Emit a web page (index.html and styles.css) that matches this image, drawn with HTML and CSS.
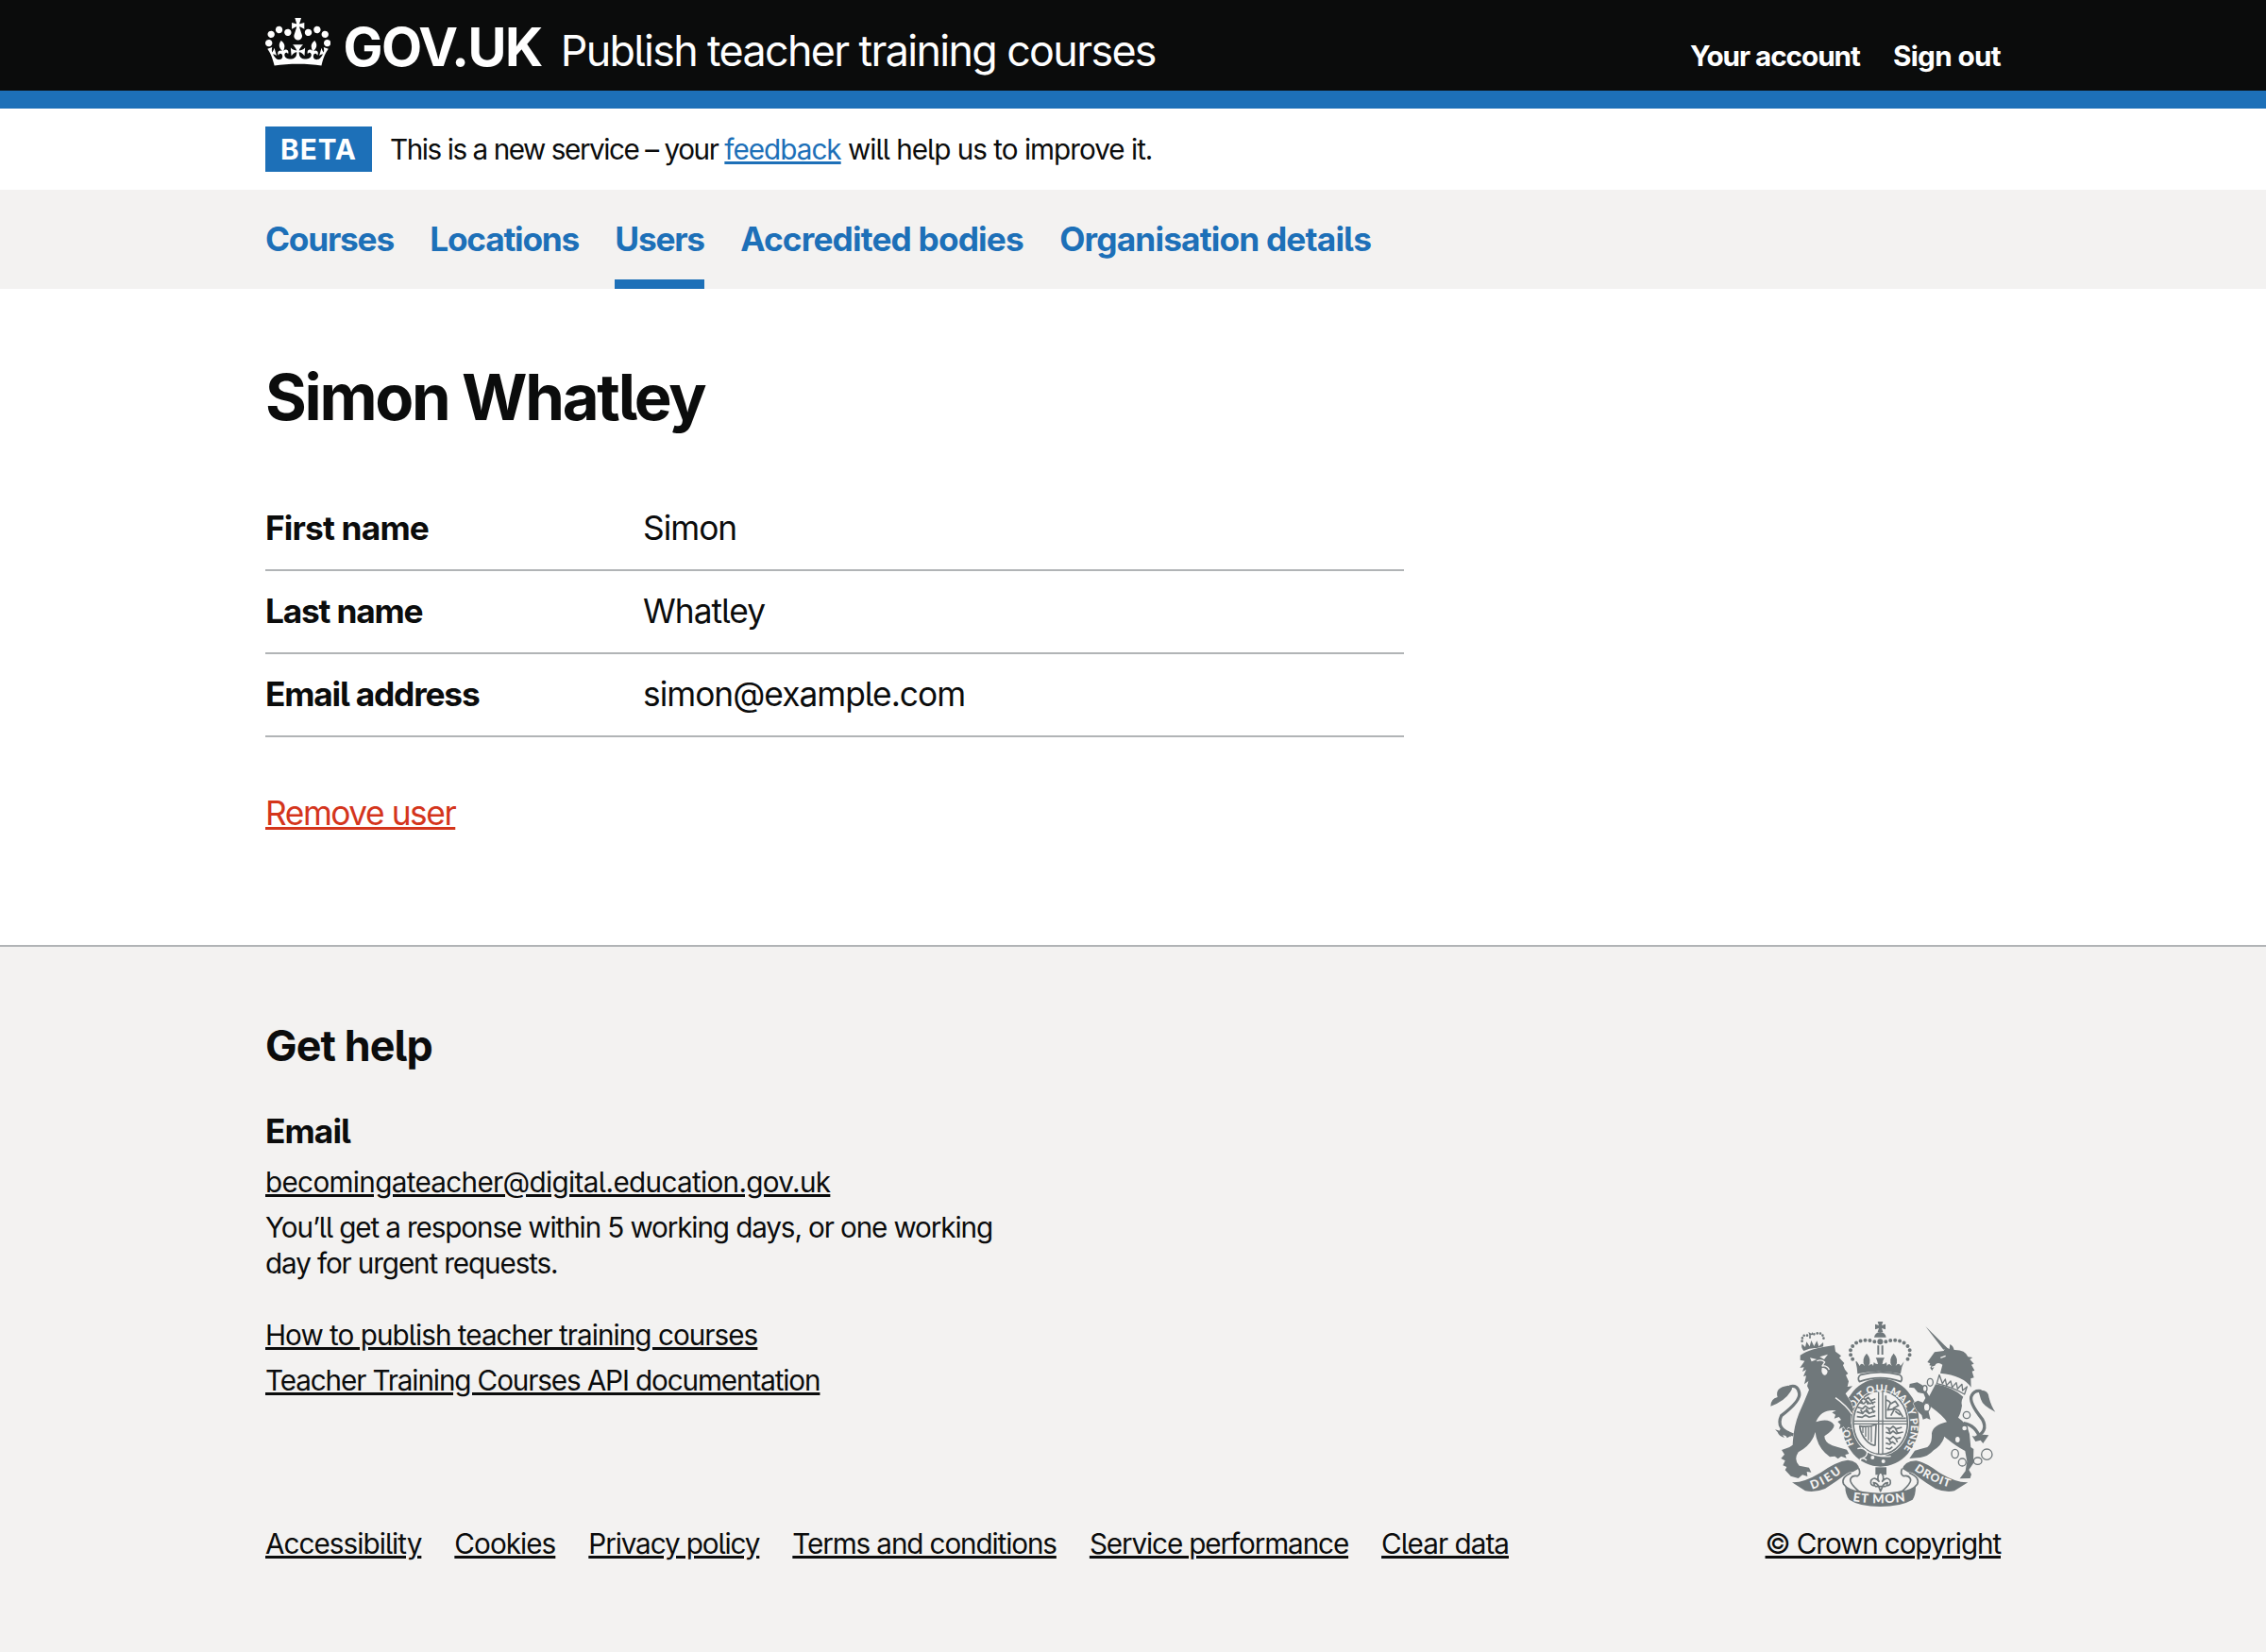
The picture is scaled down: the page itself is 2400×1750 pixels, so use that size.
FILE: index.html
```html
<!DOCTYPE html>
<html lang="en">
<head>
<meta charset="utf-8">
<title>Simon Whatley - Publish teacher training courses</title>
<link rel="stylesheet" href="styles.css">
</head>
<body>
<header class="header">
  <div class="container header-row">
    <svg class="crown" viewBox="0 0 132 97" aria-hidden="true"><path fill="currentColor" d="M25 30.2c3.5 1.5 7.7-.2 9.1-3.7 1.5-3.6-.2-7.8-3.9-9.2-3.6-1.4-7.6.3-9.1 3.9-1.4 3.5.3 7.5 3.9 9zM9 39.5c3.6 1.5 7.8-.2 9.2-3.7 1.5-3.6-.2-7.8-3.9-9.1-3.6-1.5-7.6.2-9.1 3.8-1.4 3.5.3 7.5 3.8 9zM4.4 57.2c3.5 1.5 7.7-.2 9.1-3.8 1.5-3.6-.2-7.7-3.9-9.1-3.5-1.5-7.6.3-9.1 3.8-1.4 3.5.3 7.6 3.9 9.1zm38.3-21.4c3.5 1.5 7.7-.2 9.1-3.8 1.5-3.6-.2-7.7-3.9-9.1-3.6-1.5-7.6.3-9.1 3.8-1.3 3.6.4 7.7 3.9 9.1zm64.4-5.6c-3.6 1.5-7.8-.2-9.1-3.7-1.5-3.6.2-7.8 3.8-9.2 3.6-1.4 7.7.3 9.2 3.9 1.3 3.5-.4 7.5-3.9 9zm15.9 9.3c-3.6 1.5-7.7-.2-9.1-3.7-1.5-3.6.2-7.8 3.7-9.1 3.6-1.5 7.7.2 9.2 3.8 1.5 3.5-.3 7.5-3.8 9zm4.7 17.7c-3.6 1.5-7.8-.2-9.2-3.8-1.5-3.6.2-7.7 3.9-9.1 3.6-1.5 7.7.3 9.2 3.8 1.3 3.5-.4 7.6-3.9 9.1zM89.3 35.8c-3.6 1.5-7.8-.2-9.2-3.8-1.4-3.6.2-7.7 3.9-9.1 3.6-1.5 7.7.3 9.2 3.8 1.4 3.6-.3 7.7-3.9 9.1zM69.7 17.7l8.9 4.7V9.3l-8.9 2.8c-.2-.3-.5-.6-.9-.9L72.4 0H59.6l3.5 11.2c-.3.3-.6.5-.9.9l-8.8-2.8v13.1l8.8-4.7c.3.3.6.7.9.9l-5 15.4v.1c-.2.8-.4 1.6-.4 2.4 0 4.1 3.1 7.5 7 8.1h.2c.3 0 .7.1 1 .1.4 0 .7 0 1-.1h.2c4-.6 7.1-4.1 7.1-8.1 0-.8-.1-1.7-.4-2.4V34l-5.1-15.4c.4-.2.7-.6 1-.9zM66 92.8c16.9 0 32.8 1.1 47.1 3.2 4-16.9 8.9-26.7 14-33.5l-9.6-3.4c1 4.9 1.1 7.2 0 10.2-1.5-1.4-3-4.3-4.2-8.7L108.6 76c2.8-2 5-3.2 7.5-3.3-4.4 9.4-10 11.9-13.6 11.2-4.3-.8-6.3-4.6-5.6-7.9 1-4.7 5.7-5.9 8-.5 4.3-8.7-3-11.4-7.6-8.8 7.1-7.2 7.9-13.5 2.1-21.1-8 6.1-8.1 12.3-4.5 20.8-4.7-5.4-12.1-2.5-9.5 6.2 3.4-5.2 7.9-2 7.2 3.1-.6 4.3-6.4 7.8-13.5 7.2-10.3-.9-10.9-8-11.2-13.8 2.5-.5 7.1 1.8 11 7.3L80.2 60c-4.1 4.4-8 5.3-12.3 5.4 1.4-4.4 8-11.6 8-11.6H55.5s6.4 7.2 7.9 11.6c-4.2-.1-8-1-12.3-5.4l1.4 16.4c3.9-5.5 8.5-7.7 10.9-7.3-.3 5.8-.9 12.8-11.1 13.8-7.2.6-12.9-2.9-13.5-7.2-.7-5 3.8-8.3 7.1-3.1 2.7-8.7-4.6-11.6-9.4-6.2 3.7-8.5 3.6-14.7-4.6-20.8-5.8 7.6-5 13.9 2.2 21.1-4.7-2.6-11.9.1-7.7 8.8 2.3-5.5 7.1-4.2 8.1.5.7 3.3-1.3 7.1-5.7 7.9-3.5.7-9-1.8-13.5-11.2 2.5.1 4.7 1.3 7.5 3.3l-4.7-15.4c-1.2 4.4-2.7 7.2-4.3 8.7-1.1-3-.9-5.3 0-10.2l-9.5 3.4c5 6.9 9.9 16.7 14 33.5 14.8-2.1 30.8-3.2 47.7-3.2z"/></svg>
    <a class="logotype" href="#">GOV.UK</a>
    <a class="service-name" href="#">Publish teacher training courses</a>
    <nav class="account">
      <a class="account-link" href="#">Your account</a>
      <a class="account-link signout" href="#">Sign out</a>
    </nav>
  </div>
</header>

<div class="container phase">
  <strong class="tag">BETA</strong>
  <span class="phase-text"><span class="phase-intro">This is a new service – your </span><a class="link" href="#">feedback</a> will help us to improve it.</span>
</div>

<nav class="primary">
  <div class="container primary-list">
    <a class="primary-link" href="#">Courses</a>
    <a class="primary-link" href="#">Locations</a>
    <a class="primary-link current" href="#">Users</a>
    <a class="primary-link loose" href="#">Accredited bodies</a>
    <a class="primary-link loose" href="#">Organisation details</a>
  </div>
</nav>

<main class="container main">
  <h1 class="title">Simon Whatley</h1>
  <dl class="summary">
    <div class="summary-row"><dt class="key first">First name</dt><dd class="value">Simon</dd></div>
    <div class="summary-row"><dt class="key">Last name</dt><dd class="value">Whatley</dd></div>
    <div class="summary-row"><dt class="key">Email address</dt><dd class="value">simon@example.com</dd></div>
  </dl>
  <a class="remove" href="#">Remove user</a>
</main>

<footer class="footer">
  <div class="container footer-row">
    <div class="footer-main">
      <h2 class="help-title">Get help</h2>
      <h3 class="help-subtitle">Email</h3>
      <ul class="help-list">
        <li><a class="footer-link mail" href="#">becomingateacher@digital.education.gov.uk</a></li>
        <li class="response">You’ll get a response within 5 working days, or one working<br>day for urgent requests.</li>
      </ul>
      <ul class="help-list docs">
        <li><a class="footer-link guide" href="#">How to publish teacher training courses</a></li>
        <li><a class="footer-link" href="#">Teacher Training Courses API documentation</a></li>
      </ul>
      <div class="meta-links">
        <a class="footer-link guide" href="#">Accessibility</a>
        <a class="footer-link guide" href="#">Cookies</a>
        <a class="footer-link" href="#">Privacy policy</a>
        <a class="footer-link" href="#">Terms and conditions</a>
        <a class="footer-link" href="#">Service performance</a>
        <a class="footer-link guide" href="#">Clear data</a>
      </div>
    </div>
    <div class="copyright">
      <svg class="crest" viewBox="40 30 720 595" aria-hidden="true">
        <defs>
          <path id="garter" d="M309 424 A97 111 0 1 1 459 448"/>
          <path id="dieu" d="M176 566 Q232 547 280 503"/>
          <path id="etmon" d="M305 603 Q392 617 482 602"/>
          <path id="droit" d="M500 505 Q552 545 628 564"/>
        </defs>
        <!-- royal crown -->
        <g class="ink">
          <path d="M384 33h17l-4 12 12-4v17l-12-4 4 12h-17l4-12-12 4V41l12 4zM373 83q2-15 19-17 17 2 19 17z"/>
          <circle cx="392" cy="97" r="9"/>
          <path d="M383 109h6v29h-6zM396 109h6v29h-6z"/>
          <path d="M318 160l9 14q5-13 16 0-12-20 6-40 18 20 6 40 11-12 15 0l2-12q5 7 13 6-2-12-7-20h28q-6 8-7 20 8 1 13-6l2 12q5-12 15 0-12-20 6-40 18 20 6 40 11-13 16 0l11-14q-9 18-11 39-70-15-137 0-1-20-6-39z"/>
        </g>
        <path class="beads" d="M374 97Q338 84 311 104 282 130 314 164M410 97Q446 84 473 104 502 130 470 164"/>
        <path class="outline" d="M330 202q62-16 124 0 12 8 4 22-66-24-132 0-8-14 4-22z"/>
        <!-- garter -->
        <ellipse class="ink" cx="393" cy="354" rx="123" ry="140"/>
        <ellipse class="paper" cx="393" cy="354" rx="91" ry="106"/>
        <ellipse class="outline" cx="393" cy="354" rx="86" ry="101"/>
        <path class="ink" d="M385 256h4v198h-4zM398 256h4v198h-4zM308 347h170v4H308zM308 356h170v4H308z"/>
        <path class="squiggle" d="M334 275l12 6 8-7 8 10 15-6M326 290l14 4 9-9 10 9 18-6M320 305l16 5 9-9 12 9 19-8M318 320l17 5 10-9 12 9 20-8M318 335l17 2 10-7 12 7 20-5M330 283l8 12M345 280l9 17M362 283l8 13M330 313l8 14M347 309l10 16M365 307l8 16M410 370l14 4 9-8 10 8 18-5M410 385l14 4 9-8 10 8 22-5M410 402l14 4 9-8 10 8 15-5M410 419l12 4 9-8 10 8M410 435l12 3 9-7M418 374l7 14M440 372l8 16M418 404l8 14M440 402l7 15M410 268v72h64M410 282q12 2 16 12l14-8 10 14-16 8 18 8 12 20M424 294l-8 20 22-4-12 22M440 318l16 12"/>
        <path class="outline" d="M327 365q26 5 52-5l-3 66q-10 2-22-9-24-22-27-52z"/>
        <path class="thin" d="M337 369v18M346 369v30M355 368v42M364 366v50"/>
        <g class="motto">
          <text font-size="32"><textPath href="#garter" textLength="462">HONI SOIT QUI MAL Y PENSE</textPath></text>
        </g>
        <circle class="paper" cx="368" cy="465" r="6"/><circle class="paper" cx="402" cy="477" r="6"/>
        <path class="light-line" d="M320 437q18-6 30 8 3 12-9 20-14 5-12 12M346 443q34 22 80 18M327 470q14-6 22 4"/>
        <!-- pendant -->
        <path class="ink" d="M377 496h35v24h-35z"/>
        <path class="outline" d="M393 510q-14 16-5 31-14-18-25-3-4 17 12 17l-4-10q14 2 17 14l5 13 6-13q3-12 17-14l-4 10q16 0 12-17-11-15-25 3 9-15-6-31zM376 557h34"/>
        <!-- lion -->
        <g class="ink">
          <path d="M149 126q-10-12-5-22l10 10 4-17 10 15 5-19 9 18 9-17 6 18 14-13q2 14-3 20-32-7-59 7z"/>
          <path d="M164 66l9 5 5-5v9l-7 1 1 10h-6l1-10z"/>
          <path class="body" d="M138 140Q168 118 247 108L250 128 268 142 262 148 278 165 274 172 280 185 290 198 283 203 292 223 288 240 304 238 282 262 300 290 307 312 299 332 298 350 303 374 290 368 284 379 276 367 261 375 266 361 257 351 268 345 261 336 246 341 250 329 239 322 252 316Q205 310 188 352 230 338 246 362 246 376 215 397 216 424 255 431L286 440 293 453 281 456 285 467 268 461 258 469 248 461 232 463Q192 435 186 384 175 425 132 448 116 472 135 491L166 497 173 512 159 510 161 525 145 520 132 531 108 524 90 505 95 495 83 490 90 475 77 468 88 455 79 441 104 432 114 425Q116 370 134 325 150 290 166 250L160 238 164 222 151 232 157 205 148 207 157 186 145 192 150 178 137 180 152 158 138 155z"/>
        </g>
        <path class="beads small" d="M160 77Q142 72 144 99M182 73Q213 61 213 95"/>
        <path class="paper" d="M169 148l22 5-17 7zM200 145l26-8-12 16zM207 180q12-2 18 11-2 13-11 12-11-6-7-23z"/>
        <path class="light-line" d="M191 158q15-6 25 4l-8 12q16-3 22 12M250 275q35 25 52 52"/>
        <path class="tail" d="M116 393q-58-18-38-61Q140 285 135 260 130 232 104 240M73 378q20 8 28 22"/>
        <path class="ink" d="M44 302q0-24 22-29-10-31 34-37 20 2 7 20-19 31-63 46zM58 376q18 8 44 6l8 16-28-4 6 8q-18-5-22-18z"/>
        <!-- unicorn -->
        <g class="ink">
          <path d="M536 48l69 68-12 6z"/>
          <path d="M594 126l6-12 12 6 2-15q10 4 13 18 35-1 44 22l15 2-9 6 13 14-8 3 10 18-8 3 6 20-10 3 1 28q-25-38-98-45l7-27q-12-9-21-2l-12 21-6-9 4-7-7-1 3-6-9-4 23-32z"/>
          <path class="body" d="M568 232Q620 240 656 272 648 286 652 300 648 326 640 338 668 356 676 390L680 432 689 438 688 484 674 504 682 518 678 531 645 532 663 508 668 478 662 444Q630 428 596 398 590 424 562 442 544 462 520 465L485 468 502 443 542 432Q558 420 556 388 560 362 604 352 594 334 553 304L546 320 552 345 540 340 528 344 524 330 508 316 497 292 512 284 528 290 536 276 530 262 512 258 500 244 484 242 486 231 510 226 528 236 548 270z"/>
        </g>
        <path class="paper" d="M570 212l10-4 84 36q4 8-4 22-42-24-88-36z"/>
        <path class="thin" d="M580 202l-8 28q48 10 88 34l8-24-14 12-2-20-14 15-4-20-13 15-5-20-13 14-4-20-9 14zM590 150l10-3-6 8"/>
        <path class="light-line" d="M556 178l18-5M584 148l16-6"/>
        <path class="tail" d="M657 356q40 6 54 52M692 404q46-22 25-60-45-56-34-76 9-18 30-14"/>
        <path class="ink" d="M704 252q32-5 34 23 7 27 20 45-40-19-46-40zM684 396l14 4 21-8 18 2-18 26-8-10-16 4z"/>
        <g class="chain">
          <ellipse cx="551" cy="226" rx="9" ry="12"/><ellipse cx="534" cy="246" rx="7" ry="10"/><ellipse cx="540" cy="305" rx="10" ry="13"/><circle cx="667" cy="330" r="11"/><circle cx="660" cy="372" r="9"/><ellipse cx="638" cy="408" rx="9" ry="11"/><ellipse cx="630" cy="453" rx="11" ry="14"/><circle cx="653" cy="480" r="12"/><ellipse cx="702" cy="476" rx="13" ry="11"/><circle cx="731" cy="455" r="17"/>
        </g>
        <!-- ribbon -->
        <g class="ink">
          <path d="M112 544q36 2 91-31 50-36 86-40 34 2 39 34l-10 14q-15-18-33-4-33 25-68 47-34 14-63 7z"/>
          <path d="M671 544q-36 2-91-31-46-34-74-38-38 0-46 32l10 14q13-16 30-4 31 25 68 47 34 14 60 7z"/>
          <path d="M281 556q50 22 111 22t113-22q0 30-10 43-38 22-103 22t-98-22q-13-15-13-43z"/>
        </g>
        <path class="outline" d="M300 514q-34 15-24 36 14 20 50 24-34-30-28-42 6-12 22-8 12-8 4-24M484 514q36 15 26 36-14 20-50 24 34-30 28-42-6-12-22-8-12-8-4-24"/>
        <g class="motto">
          <text font-size="37"><textPath href="#dieu" textLength="108">DIEU</textPath></text>
          <text font-size="39"><textPath href="#etmon" textLength="168">ET MON</textPath></text>
          <text font-size="36"><textPath href="#droit" textLength="124">DROIT</textPath></text>
        </g>
      </svg>
      <a class="footer-link" href="#">© Crown copyright</a>
    </div>
  </div>
</footer>
</body>
</html>
```
FILE: styles.css
```css
* { box-sizing: border-box; }

body {
  margin: 0;
  background: #fff;
  color: #0b0c0c;
  font-family: Inter, "Noto Sans", sans-serif;
  font-feature-settings: "cv05";
  font-size: 29.7px;
  line-height: 38.3px;
}

a { color: inherit; }
h1, h2, h3, dl, dd, ul { margin: 0; padding: 0; }
ul { list-style: none; }

.container { width: 1838px; margin: 0 auto; }

/* Header */
.header { height: 115px; background: #0b0c0c; color: #fff; border-bottom: 19px solid #1d70b8; }
.header a { text-decoration: none; white-space: nowrap; }
.header-row { display: flex; align-items: baseline; padding-top: 19px; }
.crown { width: 69.4px; height: 51px; margin-bottom: -3px; }
.logotype { margin-left: 13px; font-size: 56px; line-height: 1; font-weight: 700; letter-spacing: -1.5px; }
.service-name { margin-left: 20px; font-size: 44.8px; line-height: 1; letter-spacing: -1.64px; }
.account { display: flex; gap: 35px; margin-left: auto; font-weight: 700; letter-spacing: -1.05px; }
.signout { letter-spacing: -.65px; }

/* Phase banner */
.phase { display: flex; gap: 19px; padding: 19px 0; line-height: 48px; }
.tag { width: 113px; background: #1d70b8; color: #fff; text-align: center; font-weight: 700; letter-spacing: 1px; }
.phase-text { letter-spacing: -1px; white-space: nowrap; }
.phase-intro { letter-spacing: -1.45px; }
.link { color: #1d70b8; text-decoration-thickness: 3px; text-underline-offset: 2px; }

/* Primary navigation */
.primary { height: 105px; background: #f3f2f1; }
.primary-list { display: flex; gap: 38.3px; }
.primary-link { color: #1d70b8; font-size: 35.3px; line-height: 105px; font-weight: 700; letter-spacing: -1.25px; text-decoration: none; white-space: nowrap; }
.loose { letter-spacing: -.85px; }
.current { box-shadow: inset 0 -10px #1d70b8; }

/* Content */
.main { padding: 76px 0 115px; }
.title { font-size: 67px; line-height: 77px; font-weight: 700; letter-spacing: -2.3px; }
.summary { width: 1206px; margin: 58px 0 57px; font-size: 35.3px; line-height: 48px; }
.summary-row { display: flex; padding: 19px 0; border-bottom: 2px solid #b1b4b6; }
.key { width: 400px; font-weight: 700; letter-spacing: -1.2px; }
.first { letter-spacing: -.85px; }
.value { letter-spacing: -.98px; }
.remove { display: block; width: max-content; color: #d4351c; font-size: 35.3px; line-height: 48px; letter-spacing: -1.45px; text-decoration-thickness: 3px; text-underline-offset: 2px; }

/* Footer */
.footer { height: 749px; border-top: 2px solid #b1b4b6; background: #f3f2f1; }
.footer-row { display: flex; justify-content: space-between; align-items: flex-end; padding-top: 75.7px; letter-spacing: -1.13px; }
.help-title { font-size: 44.8px; line-height: 58px; letter-spacing: -.9px; }
.help-subtitle { margin: 38.5px 0 9.8px; font-size: 35.3px; line-height: 48px; letter-spacing: -.9px; }
.help-list { display: grid; gap: 9.5px; }
.mail { letter-spacing: -.69px; }
.guide { letter-spacing: -.97px; }
.docs { margin-top: 37.9px; }
.meta-links { display: flex; gap: 35px; margin-top: 134.4px; }
.footer-link { text-decoration-thickness: 2.5px; text-underline-offset: 2px; white-space: nowrap; }
.copyright { display: flex; flex-direction: column; align-items: center; gap: 18px; }

/* Crest */
.crest { width: 240px; height: 198.3px; fill: none; stroke-linejoin: round; }
.ink { fill: #70787b; }
.paper { fill: #f3f2f1; }
.outline { fill: #f3f2f1; stroke: #70787b; stroke-width: 5; }
.beads { stroke: #70787b; stroke-width: 12; stroke-linecap: round; stroke-dasharray: 0 15; }
.small { stroke-width: 8; stroke-dasharray: 0 10; }
.thin { stroke: #70787b; stroke-width: 4; }
.squiggle { stroke: #70787b; stroke-width: 5; }
.light-line { stroke: #f3f2f1; stroke-width: 4; }
.body { stroke: #f3f2f1; stroke-width: 3; paint-order: stroke; }
.tail { stroke: #70787b; stroke-width: 10; }
.chain { stroke: #70787b; stroke-width: 4; fill: #f3f2f1; }
.motto { fill: #f3f2f1; font-family: Lato, sans-serif; font-weight: 900; letter-spacing: 0; }
```
